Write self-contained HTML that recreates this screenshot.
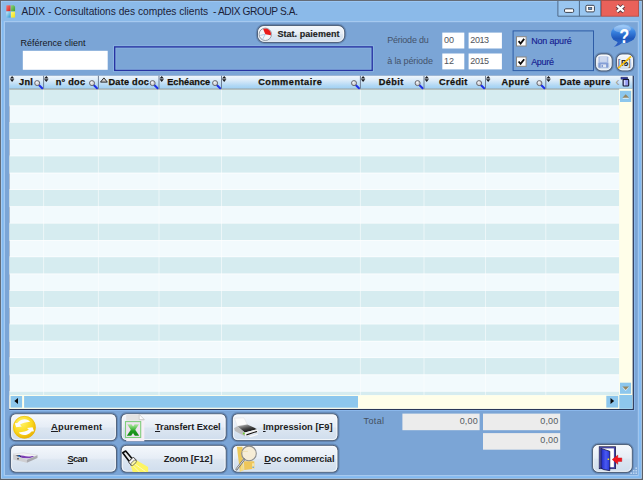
<!DOCTYPE html>
<html lang="fr">
<head>
<meta charset="utf-8">
<title>ADIX - Consultations des comptes clients - ADIX GROUP S.A.</title>
<style>
html,body{margin:0;padding:0;}
body{width:643px;height:480px;overflow:hidden;background:#8bbae9;font-family:"Liberation Sans",sans-serif;font-size:9px;color:#1a1a1a;position:relative;}
svg.L{position:absolute;left:0;top:0;}
#txt div{position:absolute;white-space:nowrap;}
u{text-decoration:underline;}
</style>
</head>
<body>
<svg class="L" width="643" height="480" viewBox="0 0 643 480">
<defs><linearGradient id="l1" x1="0" y1="0" x2="1" y2="1"><stop offset="0" stop-color="#f47a74"/><stop offset="1" stop-color="#d8201c"/></linearGradient><linearGradient id="l2" x1="0" y1="0" x2="1" y2="1"><stop offset="0" stop-color="#8ed47e"/><stop offset="1" stop-color="#3b9c2c"/></linearGradient><linearGradient id="l3" x1="0" y1="0" x2="1" y2="1"><stop offset="0" stop-color="#c8ecf8"/><stop offset="1" stop-color="#2c96d0"/></linearGradient><linearGradient id="l4" x1="0" y1="0" x2="1" y2="1"><stop offset="0" stop-color="#fffa80"/><stop offset="1" stop-color="#f2e012"/></linearGradient><linearGradient id="bg" x1="0" y1="0" x2="0" y2="1"><stop offset="0" stop-color="#f5f8fc"/><stop offset=".48" stop-color="#e6edf6"/><stop offset=".54" stop-color="#dce6f1"/><stop offset="1" stop-color="#cfdded"/></linearGradient><linearGradient id="hdg" x1="0" y1="0" x2="0" y2="1"><stop offset="0" stop-color="#eff6fc"/><stop offset=".35" stop-color="#d9eaf8"/><stop offset=".75" stop-color="#b0d7f4"/><stop offset="1" stop-color="#9ccff4"/></linearGradient><linearGradient id="hg" x1="0" y1="0" x2="0" y2="1"><stop offset="0" stop-color="#8cc2f6"/><stop offset=".35" stop-color="#3b86e2"/><stop offset=".75" stop-color="#1f58bc"/><stop offset="1" stop-color="#2a66c8"/></linearGradient><radialGradient id="yg" cx=".38" cy=".3" r=".8"><stop offset="0" stop-color="#fff36a"/><stop offset=".55" stop-color="#fbd91e"/><stop offset="1" stop-color="#e3a400"/></radialGradient><linearGradient id="xg" x1="0" y1="0" x2="0" y2="1"><stop offset="0" stop-color="#b4e8a6"/><stop offset=".35" stop-color="#5cc452"/><stop offset=".6" stop-color="#1f9a1f"/><stop offset="1" stop-color="#138a16"/></linearGradient><linearGradient id="pg" x1="0" y1="0" x2=".6" y2="1"><stop offset="0" stop-color="#c9c9c9"/><stop offset=".55" stop-color="#4a4a4a"/><stop offset="1" stop-color="#050505"/></linearGradient><linearGradient id="dg" x1="0" y1="0" x2="1" y2="0"><stop offset="0" stop-color="#1d28c8"/><stop offset=".55" stop-color="#4a5af2"/><stop offset="1" stop-color="#2433d8"/></linearGradient></defs>
<rect x="0.00" y="0.00" width="643.00" height="480.00" fill="#5c6068" />
<rect x="0.90" y="0.90" width="640.90" height="477.90" fill="#b2d5f8" />
<rect x="1.70" y="1.70" width="639.30" height="476.30" fill="#82b9f0" />
<rect x="1.70" y="1.70" width="639.30" height="19.50" fill="#8bbae9" />
<rect x="3.70" y="21.00" width="635.10" height="455.20" fill="#a6c9ef" />
<rect x="5.00" y="22.20" width="632.80" height="452.80" fill="#7ba5d6" />
<g transform="translate(5.90 4.80) scale(0.8333333333333334 1.0461538461538462)" ><rect x="0.5" y="0.5" width="5" height="5.6" fill="url(#l1)"/><path d="M6 0.5 H9.6 L11 1.8 V6.1 H6 Z" fill="url(#l2)"/><rect x="0.5" y="6.6" width="5" height="5.6" fill="url(#l3)"/><rect x="6" y="6.6" width="5" height="5.6" fill="url(#l4)"/></g>
<path d="M557.9 1 V16.2 H600.8 V1" fill="#99c6f0" stroke="#4f6a88" stroke-width="1"/>
<path d="M579.4 1 V16.2" stroke="#4f6a88" stroke-width="1"/>
<rect x="601.4" y="0.6" width="37.2" height="15.6" fill="#e9615a" stroke="#b4493f" stroke-width=".8"/>
<rect x="564.5" y="8.8" width="9.2" height="3.6" rx="1.2" fill="#fff" stroke="#3b4350" stroke-width="1"/>
<rect x="585.9" y="5.3" width="8.5" height="6.6" rx="1.2" fill="#fff" stroke="#3b4350" stroke-width="1"/>
<rect x="588.6" y="7.5" width="3.2" height="2.1" fill="#5c8fc8" stroke="#3b4350" stroke-width=".7"/>
<g transform="translate(614.40 2.90)" ><path d="M2.6 2.8 L9.4 8.8 M9.4 2.8 L2.6 8.8" stroke="#4a2f3a" stroke-width="3.9"/><path d="M2.6 2.8 L9.4 8.8 M9.4 2.8 L2.6 8.8" stroke="#fff" stroke-width="2.4"/></g>
<rect x="22.80" y="50.80" width="84.90" height="19.00" fill="#fff" />
<rect x="114.7" y="46.9" width="257.5" height="23.5" fill="none" stroke="#8fb8e4" stroke-width="3"/>
<rect x="114.7" y="46.9" width="257.5" height="23.5" fill="none" stroke="#2733a2" stroke-width="1.4"/>
<rect x="257.00" y="25.00" width="88.20" height="17.80" rx="7" fill="none" stroke="#3c5682" stroke-opacity=".3" stroke-width="2.4"/><rect x="257.50" y="25.50" width="87.20" height="16.80" rx="6.5" fill="url(#bg)" stroke="#52657f" stroke-width="1.3"/><rect x="258.50" y="26.50" width="85.20" height="14.80" rx="5.5" fill="none" stroke="#fff" stroke-opacity=".8" stroke-width="1"/>
<g transform="translate(257.30 26.80)" ><circle cx="8" cy="7.5" r="6.2" fill="#f3f6f9" stroke="#8a929c" stroke-width=".9"/><path d="M8 7.5 L5.86 2.22 A5.7 5.7 0 0 1 13.61 8.49 Z" fill="#ea1c1c"/><path d="M8 7.5 L3 8.6 M8 7.5 L5.2 12.6" stroke="#9cc4e6" stroke-width=".8"/></g>
<rect x="442.30" y="32.60" width="22.00" height="15.90" fill="#fff" />
<rect x="468.60" y="32.60" width="33.30" height="15.90" fill="#fff" />
<rect x="442.30" y="53.50" width="22.00" height="15.90" fill="#fff" />
<rect x="468.60" y="53.50" width="33.30" height="15.90" fill="#fff" />
<rect x="513.1" y="30.9" width="80.4" height="39.7" fill="none" stroke="#2e5ca6" stroke-width="1"/>
<rect x="516.5" y="36.699999999999996" width="9.6" height="9.3" fill="#fff" stroke="#8a8680" stroke-width="1"/>
<g transform="translate(516.20 36.30)" ><path d="M2.4 4.9 L4.4 7.3 L8 2.6" stroke="#0c0c0c" stroke-width="1.8" fill="none"/></g>
<rect x="516.5" y="57.0" width="9.6" height="9.3" fill="#fff" stroke="#8a8680" stroke-width="1"/>
<g transform="translate(516.20 56.60)" ><path d="M2.4 4.9 L4.4 7.3 L8 2.6" stroke="#0c0c0c" stroke-width="1.8" fill="none"/></g>
<g transform="translate(610.00 23.50)" ><path d="M3.7 23.2 C6.4 21.6 7.6 20 7.8 17.6 L12.4 19 C10.4 21 7.4 22.8 3.7 23.2 Z" fill="#2a5cc0"/><ellipse cx="13.4" cy="10.4" rx="12.4" ry="9.3" fill="url(#hg)"/><ellipse cx="12.4" cy="5.4" rx="8.6" ry="3.6" fill="#fff" opacity=".28"/><text transform="translate(14.2 19) scale(.8 1)" x="0" y="0" text-anchor="middle" font-family="Liberation Sans, sans-serif" font-weight="bold" font-size="20.5" fill="#fff">?</text></g>
<rect x="595.10" y="53.50" width="17.50" height="17.80" rx="6" fill="none" stroke="#3c5682" stroke-opacity=".3" stroke-width="2.4"/><rect x="595.60" y="54.00" width="16.50" height="16.80" rx="5.5" fill="url(#bg)" stroke="#52657f" stroke-width="1.3"/><rect x="596.60" y="55.00" width="14.50" height="14.80" rx="4.5" fill="none" stroke="#fff" stroke-opacity=".8" stroke-width="1"/>
<rect x="616.10" y="53.50" width="17.90" height="17.80" rx="6" fill="none" stroke="#3c5682" stroke-opacity=".3" stroke-width="2.4"/><rect x="616.60" y="54.00" width="16.90" height="16.80" rx="5.5" fill="url(#bg)" stroke="#52657f" stroke-width="1.3"/><rect x="617.60" y="55.00" width="14.90" height="14.80" rx="4.5" fill="none" stroke="#fff" stroke-opacity=".8" stroke-width="1"/>
<g transform="translate(598.20 56.20) scale(0.9636363636363636 0.8571428571428571)" opacity=".62"><rect x="0.3" y="0.3" width="10.2" height="13" rx="1" fill="#7d9bd8"/><rect x="1.6" y="0.3" width="7.4" height="6.4" fill="#b9c9ea"/><rect x="0.3" y="8" width="10.2" height="5.3" fill="#4d72c4"/><rect x="2.6" y="9.6" width="5.6" height="3.4" fill="#e6ebf5"/><rect x="3.4" y="10.2" width="1.6" height="2.4" fill="#4d72c4"/></g>
<rect x="9.40" y="75.80" width="625.60" height="335.20" fill="#8ab7eb" />
<rect x="9.40" y="75.80" width="624.50" height="334.20" fill="#2b3758" />
<rect x="9.40" y="75.80" width="623.00" height="333.00" fill="#f2fafd" />
<rect x="9.40" y="89.13" width="609.80" height="16.37" fill="#d6ecf0" />
<rect x="9.40" y="105.50" width="609.80" height="0.80" fill="#fff" fill-opacity=".8"/>
<rect x="9.40" y="121.95" width="609.80" height="0.80" fill="#fff" fill-opacity=".8"/>
<rect x="9.40" y="122.75" width="609.80" height="16.37" fill="#d6ecf0" />
<rect x="9.40" y="139.12" width="609.80" height="0.80" fill="#fff" fill-opacity=".8"/>
<rect x="9.40" y="155.57" width="609.80" height="0.80" fill="#fff" fill-opacity=".8"/>
<rect x="9.40" y="156.37" width="609.80" height="16.37" fill="#d6ecf0" />
<rect x="9.40" y="172.74" width="609.80" height="0.80" fill="#fff" fill-opacity=".8"/>
<rect x="9.40" y="189.19" width="609.80" height="0.80" fill="#fff" fill-opacity=".8"/>
<rect x="9.40" y="189.99" width="609.80" height="16.37" fill="#d6ecf0" />
<rect x="9.40" y="206.36" width="609.80" height="0.80" fill="#fff" fill-opacity=".8"/>
<rect x="9.40" y="222.81" width="609.80" height="0.80" fill="#fff" fill-opacity=".8"/>
<rect x="9.40" y="223.61" width="609.80" height="16.37" fill="#d6ecf0" />
<rect x="9.40" y="239.98" width="609.80" height="0.80" fill="#fff" fill-opacity=".8"/>
<rect x="9.40" y="256.43" width="609.80" height="0.80" fill="#fff" fill-opacity=".8"/>
<rect x="9.40" y="257.23" width="609.80" height="16.37" fill="#d6ecf0" />
<rect x="9.40" y="273.60" width="609.80" height="0.80" fill="#fff" fill-opacity=".8"/>
<rect x="9.40" y="290.05" width="609.80" height="0.80" fill="#fff" fill-opacity=".8"/>
<rect x="9.40" y="290.85" width="609.80" height="16.37" fill="#d6ecf0" />
<rect x="9.40" y="307.22" width="609.80" height="0.80" fill="#fff" fill-opacity=".8"/>
<rect x="9.40" y="323.67" width="609.80" height="0.80" fill="#fff" fill-opacity=".8"/>
<rect x="9.40" y="324.47" width="609.80" height="16.37" fill="#d6ecf0" />
<rect x="9.40" y="340.84" width="609.80" height="0.80" fill="#fff" fill-opacity=".8"/>
<rect x="9.40" y="357.29" width="609.80" height="0.80" fill="#fff" fill-opacity=".8"/>
<rect x="9.40" y="358.09" width="609.80" height="16.37" fill="#d6ecf0" />
<rect x="9.40" y="374.46" width="609.80" height="0.80" fill="#fff" fill-opacity=".8"/>
<rect x="9.40" y="390.91" width="609.80" height="0.80" fill="#fff" fill-opacity=".8"/>
<rect x="9.40" y="391.71" width="609.80" height="3.49" fill="#d6ecf0" />
<rect x="43.10" y="88.80" width="1.00" height="306.40" fill="#fff" fill-opacity=".55"/>
<rect x="97.90" y="88.80" width="1.00" height="306.40" fill="#fff" fill-opacity=".55"/>
<rect x="158.50" y="88.80" width="1.00" height="306.40" fill="#fff" fill-opacity=".55"/>
<rect x="221.00" y="88.80" width="1.00" height="306.40" fill="#fff" fill-opacity=".55"/>
<rect x="359.90" y="88.80" width="1.00" height="306.40" fill="#fff" fill-opacity=".55"/>
<rect x="423.50" y="88.80" width="1.00" height="306.40" fill="#fff" fill-opacity=".55"/>
<rect x="485.00" y="88.80" width="1.00" height="306.40" fill="#fff" fill-opacity=".55"/>
<rect x="545.30" y="88.80" width="1.00" height="306.40" fill="#fff" fill-opacity=".55"/>
<rect x="9.40" y="75.80" width="623.00" height="13.30" fill="url(#hdg)" />
<rect x="9.40" y="88.50" width="623.00" height="1.10" fill="#9b9c96" fill-opacity=".9"/>
<g transform="translate(9.70 76.10) scale(0.96 0.8857142857142858)" ><path d="M2.5 0 L4.8 2.8 H0.2 Z M0.2 3.6 H4.8 L2.5 6.6 Z" fill="#1e1e22"/></g>
<g transform="translate(33.90 79.40)" ><path d="M5 5.6 L8.3 8.8" stroke="#1f30e6" stroke-width="2" stroke-linecap="round"/><circle cx="3.3" cy="3.7" r="2.5" fill="#d4d6dc" stroke="#68686e" stroke-width="1"/><circle cx="2.8" cy="3.2" r="1" fill="#f4f4f6"/></g>
<rect x="43.10" y="75.80" width="1.00" height="13.00" fill="#6f7f95" />
<g transform="translate(43.90 76.10) scale(0.96 0.8857142857142858)" ><path d="M2.5 0 L4.8 2.8 H0.2 Z M0.2 3.6 H4.8 L2.5 6.6 Z" fill="#1e1e22"/></g>
<g transform="translate(88.70 79.40)" ><path d="M5 5.6 L8.3 8.8" stroke="#1f30e6" stroke-width="2" stroke-linecap="round"/><circle cx="3.3" cy="3.7" r="2.5" fill="#d4d6dc" stroke="#68686e" stroke-width="1"/><circle cx="2.8" cy="3.2" r="1" fill="#f4f4f6"/></g>
<rect x="97.90" y="75.80" width="1.00" height="13.00" fill="#6f7f95" />
<g transform="translate(100.00 77.30)" ><path d="M3.9 0.6 L7.3 4.8 H0.5 Z" fill="#cdcdcd" stroke="#2a2a2a" stroke-width="1" stroke-linejoin="round"/></g>
<g transform="translate(149.30 79.40)" ><path d="M5 5.6 L8.3 8.8" stroke="#1f30e6" stroke-width="2" stroke-linecap="round"/><circle cx="3.3" cy="3.7" r="2.5" fill="#d4d6dc" stroke="#68686e" stroke-width="1"/><circle cx="2.8" cy="3.2" r="1" fill="#f4f4f6"/></g>
<rect x="158.50" y="75.80" width="1.00" height="13.00" fill="#6f7f95" />
<g transform="translate(159.30 76.10) scale(0.96 0.8857142857142858)" ><path d="M2.5 0 L4.8 2.8 H0.2 Z M0.2 3.6 H4.8 L2.5 6.6 Z" fill="#1e1e22"/></g>
<g transform="translate(211.80 79.40)" ><path d="M5 5.6 L8.3 8.8" stroke="#1f30e6" stroke-width="2" stroke-linecap="round"/><circle cx="3.3" cy="3.7" r="2.5" fill="#d4d6dc" stroke="#68686e" stroke-width="1"/><circle cx="2.8" cy="3.2" r="1" fill="#f4f4f6"/></g>
<rect x="221.00" y="75.80" width="1.00" height="13.00" fill="#6f7f95" />
<g transform="translate(221.80 76.10) scale(0.96 0.8857142857142858)" ><path d="M2.5 0 L4.8 2.8 H0.2 Z M0.2 3.6 H4.8 L2.5 6.6 Z" fill="#1e1e22"/></g>
<g transform="translate(350.70 79.40)" ><path d="M5 5.6 L8.3 8.8" stroke="#1f30e6" stroke-width="2" stroke-linecap="round"/><circle cx="3.3" cy="3.7" r="2.5" fill="#d4d6dc" stroke="#68686e" stroke-width="1"/><circle cx="2.8" cy="3.2" r="1" fill="#f4f4f6"/></g>
<rect x="359.90" y="75.80" width="1.00" height="13.00" fill="#6f7f95" />
<g transform="translate(360.70 76.10) scale(0.96 0.8857142857142858)" ><path d="M2.5 0 L4.8 2.8 H0.2 Z M0.2 3.6 H4.8 L2.5 6.6 Z" fill="#1e1e22"/></g>
<g transform="translate(414.30 79.40)" ><path d="M5 5.6 L8.3 8.8" stroke="#1f30e6" stroke-width="2" stroke-linecap="round"/><circle cx="3.3" cy="3.7" r="2.5" fill="#d4d6dc" stroke="#68686e" stroke-width="1"/><circle cx="2.8" cy="3.2" r="1" fill="#f4f4f6"/></g>
<rect x="423.50" y="75.80" width="1.00" height="13.00" fill="#6f7f95" />
<g transform="translate(424.30 76.10) scale(0.96 0.8857142857142858)" ><path d="M2.5 0 L4.8 2.8 H0.2 Z M0.2 3.6 H4.8 L2.5 6.6 Z" fill="#1e1e22"/></g>
<g transform="translate(475.80 79.40)" ><path d="M5 5.6 L8.3 8.8" stroke="#1f30e6" stroke-width="2" stroke-linecap="round"/><circle cx="3.3" cy="3.7" r="2.5" fill="#d4d6dc" stroke="#68686e" stroke-width="1"/><circle cx="2.8" cy="3.2" r="1" fill="#f4f4f6"/></g>
<rect x="485.00" y="75.80" width="1.00" height="13.00" fill="#6f7f95" />
<g transform="translate(485.80 76.10) scale(0.96 0.8857142857142858)" ><path d="M2.5 0 L4.8 2.8 H0.2 Z M0.2 3.6 H4.8 L2.5 6.6 Z" fill="#1e1e22"/></g>
<g transform="translate(536.10 79.40)" ><path d="M5 5.6 L8.3 8.8" stroke="#1f30e6" stroke-width="2" stroke-linecap="round"/><circle cx="3.3" cy="3.7" r="2.5" fill="#d4d6dc" stroke="#68686e" stroke-width="1"/><circle cx="2.8" cy="3.2" r="1" fill="#f4f4f6"/></g>
<rect x="545.30" y="75.80" width="1.00" height="13.00" fill="#6f7f95" />
<g transform="translate(546.10 76.10) scale(0.96 0.8857142857142858)" ><path d="M2.5 0 L4.8 2.8 H0.2 Z M0.2 3.6 H4.8 L2.5 6.6 Z" fill="#1e1e22"/></g>
<g transform="translate(620.60 76.80)" ><rect x="0.4" y="0.4" width="6.4" height="1.9" fill="#3b48c8" stroke="#22224a" stroke-width=".6"/><rect x="2.5" y="2.6" width="5.6" height="6.6" rx=".8" fill="#959cf0" stroke="#15152a" stroke-width="1.1"/><rect x="3.4" y="3.4" width="1.3" height="5" fill="#d6d9fb"/></g>
<rect x="619.20" y="88.80" width="13.20" height="306.40" fill="#fffee9" />
<rect x="620.00" y="90.80" width="11.20" height="11.20" fill="#8dc7ed" />
<g transform="translate(620.00 90.80)" ><path d="M5.7 4.4 L9 8 H2.4 Z" fill="#fff" fill-opacity=".75"/><path d="M5.7 3.4 L9 7 H2.4 Z" fill="#948560"/></g>
<rect x="620.00" y="382.70" width="11.10" height="11.10" fill="#8dc7ed" />
<g transform="translate(620.00 382.70)" ><path d="M5.7 8.2 L9 4.6 H2.4 Z" fill="#fff" fill-opacity=".75"/><path d="M5.7 7.4 L9 3.8 H2.4 Z" fill="#948560"/></g>
<rect x="9.40" y="395.20" width="623.00" height="13.60" fill="#fffee9" />
<rect x="10.60" y="396.00" width="11.50" height="11.60" fill="#8dc7ed" />
<rect x="24.10" y="396.00" width="333.90" height="11.70" fill="#8dc7ed" />
<g transform="translate(14.20 398.00)" ><path d="M0.1 3.1 L3.8 0.1 V6.1 Z" fill="#0a0a0a"/></g>
<rect x="606.30" y="395.80" width="11.90" height="11.80" fill="#8dc7ed" />
<g transform="translate(610.30 398.00)" ><path d="M3.9 3.1 L0.2 0.1 V6.1 Z" fill="#0a0a0a"/></g>
<rect x="619.30" y="395.00" width="13.10" height="13.80" fill="#8dc7ed" />
<rect x="10.10" y="413.30" width="106.80" height="27.80" rx="5.5" fill="none" stroke="#3c5682" stroke-opacity=".3" stroke-width="2.4"/><rect x="10.60" y="413.80" width="105.80" height="26.80" rx="5.0" fill="url(#bg)" stroke="#52657f" stroke-width="1.3"/><rect x="11.60" y="414.80" width="103.80" height="24.80" rx="4.0" fill="none" stroke="#fff" stroke-opacity=".8" stroke-width="1"/>
<rect x="120.70" y="413.30" width="105.90" height="27.80" rx="5.5" fill="none" stroke="#3c5682" stroke-opacity=".3" stroke-width="2.4"/><rect x="121.20" y="413.80" width="104.90" height="26.80" rx="5.0" fill="url(#bg)" stroke="#52657f" stroke-width="1.3"/><rect x="122.20" y="414.80" width="102.90" height="24.80" rx="4.0" fill="none" stroke="#fff" stroke-opacity=".8" stroke-width="1"/>
<rect x="231.90" y="413.30" width="106.50" height="27.80" rx="5.5" fill="none" stroke="#3c5682" stroke-opacity=".3" stroke-width="2.4"/><rect x="232.40" y="413.80" width="105.50" height="26.80" rx="5.0" fill="url(#bg)" stroke="#52657f" stroke-width="1.3"/><rect x="233.40" y="414.80" width="103.50" height="24.80" rx="4.0" fill="none" stroke="#fff" stroke-opacity=".8" stroke-width="1"/>
<rect x="10.10" y="444.80" width="106.80" height="27.90" rx="5.5" fill="none" stroke="#3c5682" stroke-opacity=".3" stroke-width="2.4"/><rect x="10.60" y="445.30" width="105.80" height="26.90" rx="5.0" fill="url(#bg)" stroke="#52657f" stroke-width="1.3"/><rect x="11.60" y="446.30" width="103.80" height="24.90" rx="4.0" fill="none" stroke="#fff" stroke-opacity=".8" stroke-width="1"/>
<rect x="120.70" y="444.80" width="105.90" height="27.90" rx="5.5" fill="none" stroke="#3c5682" stroke-opacity=".3" stroke-width="2.4"/><rect x="121.20" y="445.30" width="104.90" height="26.90" rx="5.0" fill="url(#bg)" stroke="#52657f" stroke-width="1.3"/><rect x="122.20" y="446.30" width="102.90" height="24.90" rx="4.0" fill="none" stroke="#fff" stroke-opacity=".8" stroke-width="1"/>
<rect x="231.90" y="444.80" width="106.50" height="27.90" rx="5.5" fill="none" stroke="#3c5682" stroke-opacity=".3" stroke-width="2.4"/><rect x="232.40" y="445.30" width="105.50" height="26.90" rx="5.0" fill="url(#bg)" stroke="#52657f" stroke-width="1.3"/><rect x="233.40" y="446.30" width="103.50" height="24.90" rx="4.0" fill="none" stroke="#fff" stroke-opacity=".8" stroke-width="1"/>
<g transform="translate(12.50 415.40)" ><circle cx="11.9" cy="11.8" r="11.3" fill="url(#yg)"/><circle cx="11.9" cy="11.8" r="10.9" fill="none" stroke="#e9b70c" stroke-width=".8" opacity=".7"/><g fill="#fbfbff" transform="translate(11.9 11.8) scale(1.13) translate(-11.9 -11.8)"><path id="ar" d="M16.95 7 C15 4.3 9.6 3.5 5.6 8.1 L3.4 8.2 L4.65 11.8 L9.6 11.2 L8 9.7 C10.1 7.9 13 7.6 16.95 7 Z"/><use href="#ar" transform="rotate(180 11.9 11.8)"/></g></g>
<g transform="translate(124.00 414.00)" ><path d="M2.2 0.4 H15.2 L20.3 5.6 V27.2 H2.2 Z" fill="#f7eef7"/><path d="M2.2 0.4 H15.2 L20.3 5.6 V6.8 H2.2 Z" fill="#e3e3e3"/><path d="M15.2 0.4 L20.3 5.6 H15.2 Z" fill="#fdfdfd" stroke="#b9b9b9" stroke-width=".6"/><rect x="1.5" y="7.6" width="15.2" height="15.9" fill="#efe3f0" stroke="#7fce7c" stroke-width="1.1"/><path d="M10.6 10.2 H15 L7.2 21.8 H2.8 Z" fill="url(#xg)"/><path d="M3.2 10.2 H7.6 L15.2 21.8 H10.8 Z" fill="url(#xg)"/></g>
<g transform="translate(233.30 416.90) scale(1.05 1.0380952380952382)" ><path d="M1 1.2 L10.2 0.9 L13.4 7.4 L3.8 8.9 Z" fill="#fbfbfb" stroke="#dedede" stroke-width=".5"/><path d="M3.8 9 L13.4 7.4 L22.8 11.8 L11 15 Z" fill="url(#pg)"/><path d="M0.8 11 L3.8 9 L11 15 L11.4 18.8 L1.6 13.6 Z" fill="#bdbdbd"/><path d="M11 15 L22.8 11.8 L24.2 14.6 L11.6 18.8 Z" fill="#f4f4f4"/><path d="M12.4 16.6 L22.4 13.6 L22.8 14.5 L12.6 17.8 Z" fill="#111"/><path d="M14.6 18.6 L23 16.2 L23.6 17.2 L16 19.6 Z" fill="#fafafa"/><circle cx="10" cy="16" r=".9" fill="#6ad02c"/></g>
<g transform="translate(12.50 452.00)" ><path d="M0.6 2 L11.2 0.8 L25 3.2 L14.4 7.6 Z" fill="#f1f1f3" stroke="#d2d2d6" stroke-width=".5"/><path d="M6.6 3.2 C11 3.2 14 5.4 19.6 3.9 L21.8 4.4 C16 7 11.6 6.2 7.4 5.4 Z" fill="#7d3fb5"/><path d="M2.8 3.8 L7.4 3 L8.2 5 L3.8 5.7 Z" fill="#0a0a14"/><circle cx="6.6" cy="4.2" r="1" fill="#2c7fe0"/><path d="M0.5 2.6 L14.4 7.7 L14.4 10.8 L0.7 7.4 Z" fill="#cfcfd2"/><path d="M14.4 7.7 L25 3.3 L25 6 L14.4 10.8 Z" fill="#a9a9ae"/><rect x="4.6" y="6.4" width="1.8" height=".9" fill="#1a1a1a"/></g>
<g transform="translate(121.50 450.50)" ><path d="M9.2 14.4 L14.6 9.6 L26.6 16.6 L26.6 21.6 L11.2 21.6 Z" fill="#fdf562"/><path d="M11.6 15.2 L18 21.6 M13.6 13.6 L24 21 " stroke="#fffbd0" stroke-width="1" opacity=".8"/><path d="M1.2 2.3 L4.2 0.5 L10.9 8.4 L7.8 11 Z" fill="#e9e9e9" stroke="#0a0a0a" stroke-width="1.6" stroke-linejoin="round"/><path d="M7 11.4 L11.8 6.6 L14.8 9.6 L9.6 14.8 Z" fill="#f6f6f6" stroke="#444" stroke-width="1"/><ellipse cx="12.1" cy="12.3" rx="3.6" ry="1.6" transform="rotate(-44 12.1 12.3)" fill="#fbf7a8" stroke="#555" stroke-width=".7"/></g>
<g transform="translate(234.50 445.80)" ><path d="M2.4 1 H8 L8.6 24 L5.4 26 Z" fill="#ecc85a"/><path d="M5.4 26 L8.4 12 L9.4 24.4 Z" fill="#f5dc86"/><path d="M9.4 15.4 H19.8 V23 L9.8 24.2 Z" fill="#eec65a"/><path d="M17.6 17.4 H19.8 V23 L17.6 23.3 Z" fill="#f7e5a6"/><rect x="18" y="20.8" width="1.3" height="1.3" fill="#4a90e0"/><circle cx="14.5" cy="7.6" r="7.3" fill="#f7ecd2" fill-opacity=".88" stroke="#8d8d8d" stroke-width="1.1"/><path d="M7.6 5.6 H13.4" stroke="#edd9a0" stroke-width=".7"/><path d="M9.6 13.6 L2 23.6" stroke="#6e6e6e" stroke-width="2.2" stroke-linecap="round"/><path d="M9.3 13.9 L2 23.4" stroke="#e8e8e8" stroke-width=".9" stroke-linecap="round"/></g>
<rect x="402.40" y="413.60" width="77.20" height="16.60" fill="#ececec" />
<rect x="483.00" y="413.60" width="77.20" height="16.60" fill="#ececec" />
<rect x="483.00" y="433.10" width="77.20" height="16.60" fill="#ececec" />
<rect x="592.10" y="444.00" width="40.60" height="28.80" rx="6" fill="none" stroke="#3c5682" stroke-opacity=".3" stroke-width="2.4"/><rect x="592.60" y="444.50" width="39.60" height="27.80" rx="5.5" fill="url(#bg)" stroke="#52657f" stroke-width="1.3"/><rect x="593.60" y="445.50" width="37.60" height="25.80" rx="4.5" fill="none" stroke="#fff" stroke-opacity=".8" stroke-width="1"/>
<g transform="translate(598.00 445.50)" ><rect x="1.3" y="1.3" width="16.2" height="21.8" fill="#fff" stroke="#16163a" stroke-width=".9"/><rect x="2.2" y="2.2" width="14.4" height="20.2" fill="none" stroke="#4444a6" stroke-width="1.4"/><path d="M3.1 2.9 L11.8 5.8 V25.2 L5.4 24 L3.1 22.6 Z" fill="url(#dg)" stroke="#0c0c30" stroke-width=".7"/><rect x="9.6" y="13" width="1.5" height="1.5" fill="#f4e21c"/><path d="M14.2 14 L19.8 9.6 V12.4 H23.8 V16 H19.8 V18.8 Z" fill="#f0141c" stroke="#c00a14" stroke-width=".4"/></g>
<g transform="translate(630.00 467.00)" ><g fill="#bcd5f1"><rect x="5.4" y="0.4" width="1.6" height="1.6"/><rect x="2.9" y="2.9" width="1.6" height="1.6"/><rect x="5.4" y="2.9" width="1.6" height="1.6"/><rect x="0.4" y="5.4" width="1.6" height="1.6"/><rect x="2.9" y="5.4" width="1.6" height="1.6"/><rect x="5.4" y="5.4" width="1.6" height="1.6"/></g></g>
</svg>
<div id="txt">
<div style="left:21.40px;top:4.50px;font-size:10.2px;line-height:14px;letter-spacing:-0.005px;color:#1b2238;">ADIX - Consultations des comptes clients</div>
<div style="left:213.10px;top:4.50px;font-size:10.2px;line-height:14px;letter-spacing:-0.415px;color:#1b2238;">- ADIX GROUP S.A.</div>
<div style="left:20.50px;top:36.00px;font-size:9px;line-height:14px;letter-spacing:0.004px;color:#15171c;">Référence client</div>
<div style="left:277.40px;top:27.00px;font-size:9px;line-height:14px;letter-spacing:0.053px;color:#1d1d22;font-weight:bold;-webkit-text-stroke:.15px #1d1d22;">Stat. paiement</div>
<div style="left:387.20px;top:33.00px;font-size:9px;line-height:14px;letter-spacing:-0.215px;color:#44536b;">Période du</div>
<div style="left:387.20px;top:54.00px;font-size:9px;line-height:14px;letter-spacing:-0.121px;color:#44536b;">à la période</div>
<div style="left:444.00px;top:33.00px;font-size:9px;line-height:14px;letter-spacing:-0.111px;color:#50545c;">00</div>
<div style="left:470.30px;top:33.00px;font-size:9px;line-height:14px;letter-spacing:-0.407px;color:#50545c;">2013</div>
<div style="left:444.00px;top:54.00px;font-size:9px;line-height:14px;letter-spacing:-0.111px;color:#50545c;">12</div>
<div style="left:470.30px;top:54.00px;font-size:9px;line-height:14px;letter-spacing:-0.407px;color:#50545c;">2015</div>
<div style="left:531.20px;top:34.00px;font-size:9px;line-height:14px;letter-spacing:-0.191px;color:#171f92;-webkit-text-stroke:.15px #171f92;">Non apuré</div>
<div style="left:531.20px;top:55.00px;font-size:9px;line-height:14px;letter-spacing:-0.329px;color:#171f92;-webkit-text-stroke:.15px #171f92;">Apuré</div>
<div style="left:617.80px;top:55.50px;font-size:9.4px;line-height:14px;letter-spacing:-0.111px;color:#2a4a8a;">[</div>
<div style="left:621.00px;top:56.00px;font-size:8.6px;line-height:14px;letter-spacing:-2.736px;color:#23252c;font-weight:bold;">F5</div>
<div style="left:628.30px;top:55.50px;font-size:9.4px;line-height:14px;letter-spacing:-0.011px;color:#8a5a20;">]</div>
<div style="left:19.10px;top:75.00px;font-size:9.2px;line-height:14px;letter-spacing:0.204px;color:#15120c;font-weight:bold;-webkit-text-stroke:.25px #15120c;">Jnl</div>
<div style="left:55.70px;top:75.00px;font-size:9.2px;line-height:14px;letter-spacing:0.238px;color:#15120c;font-weight:bold;-webkit-text-stroke:.25px #15120c;">n° doc</div>
<div style="left:108.40px;top:75.00px;font-size:9.2px;line-height:14px;letter-spacing:0.249px;color:#15120c;font-weight:bold;-webkit-text-stroke:.25px #15120c;">Date doc</div>
<div style="left:167.20px;top:75.00px;font-size:9.2px;line-height:14px;letter-spacing:0.020px;color:#15120c;font-weight:bold;-webkit-text-stroke:.25px #15120c;">Echéance</div>
<div style="left:258.20px;top:75.00px;font-size:9.2px;line-height:14px;letter-spacing:0.501px;color:#15120c;font-weight:bold;-webkit-text-stroke:.25px #15120c;">Commentaire</div>
<div style="left:378.70px;top:75.00px;font-size:9.2px;line-height:14px;letter-spacing:0.400px;color:#15120c;font-weight:bold;-webkit-text-stroke:.25px #15120c;">Débit</div>
<div style="left:439.10px;top:75.00px;font-size:9.2px;line-height:14px;letter-spacing:0.324px;color:#15120c;font-weight:bold;-webkit-text-stroke:.25px #15120c;">Crédit</div>
<div style="left:501.40px;top:75.00px;font-size:9.2px;line-height:14px;letter-spacing:0.380px;color:#15120c;font-weight:bold;-webkit-text-stroke:.25px #15120c;">Apuré</div>
<div style="left:559.70px;top:75.00px;font-size:9.2px;line-height:14px;letter-spacing:0.350px;color:#15120c;font-weight:bold;-webkit-text-stroke:.25px #15120c;">Date apure</div>
<div style="left:615.6px;top:75.5px;color:#a09c94;font-size:12.5px;line-height:12px">‹</div>
<div style="left:51.00px;top:420.00px;font-size:9.3px;line-height:14px;letter-spacing:0.264px;color:#1d1d22;font-weight:bold;"><u>A</u>purement</div>
<div style="left:155.00px;top:420.00px;font-size:9.3px;line-height:14px;letter-spacing:-0.070px;color:#1d1d22;font-weight:bold;"><u>T</u>ransfert Excel</div>
<div style="left:263.00px;top:420.00px;font-size:9.3px;line-height:14px;letter-spacing:0.018px;color:#1d1d22;font-weight:bold;"><u>I</u>mpression [F9]</div>
<div style="left:67.60px;top:452.00px;font-size:9.3px;line-height:14px;letter-spacing:-0.743px;color:#1d1d22;font-weight:bold;"><u>S</u>can</div>
<div style="left:163.70px;top:452.00px;font-size:9.3px;line-height:14px;letter-spacing:-0.146px;color:#1d1d22;font-weight:bold;">Zoom [F12]</div>
<div style="left:264.20px;top:452.00px;font-size:9.3px;line-height:14px;letter-spacing:-0.119px;color:#1d1d22;font-weight:bold;"><u>D</u>oc commercial</div>
<div style="left:363.50px;top:414.00px;font-size:9px;line-height:14px;letter-spacing:0.397px;color:#445060;">Total</div>
<div style="left:459.70px;top:414.00px;font-size:9px;line-height:14px;letter-spacing:0.161px;color:#555a62;">0,00</div>
<div style="left:540.30px;top:414.00px;font-size:9px;line-height:14px;letter-spacing:0.161px;color:#555a62;">0,00</div>
<div style="left:540.30px;top:433.00px;font-size:9px;line-height:14px;letter-spacing:0.161px;color:#555a62;">0,00</div>
</div>
<svg class="L" width="643" height="480" viewBox="0 0 643 480">
<path d="M618 68.3 L631 56.3" stroke="#f8c010" stroke-width="1.7"/>
</svg>
</body>
</html>
